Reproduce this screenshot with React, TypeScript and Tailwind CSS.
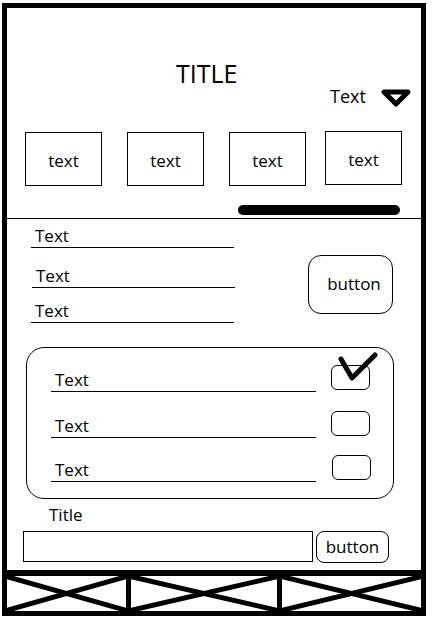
function Underlined({ className = '', width }: { className?: string; width: string }) {
  return (
    <div className={`border-b border-black pb-[3px] pl-[4px] text-[17px] leading-[17px] ${width} ${className}`}>
      Text
    </div>
  );
}

function Cross() {
  return (
    <svg className="h-full w-full" viewBox="0 0 100 100" preserveAspectRatio="none">
      <line x1="0" y1="2" x2="100" y2="98" stroke="black" strokeWidth="5" vectorEffect="non-scaling-stroke" />
      <line x1="0" y1="98" x2="100" y2="2" stroke="black" strokeWidth="5" vectorEffect="non-scaling-stroke" />
    </svg>
  );
}

function Checkbox({ className = '' }: { className?: string }) {
  return <div className={`h-[25px] w-[39px] rounded-[6px] border border-black ${className}`} />;
}

export default function App() {
  const tabs = [
    { ml: 'ml-[18px]', extra: '' },
    { ml: 'ml-[25px]', extra: '' },
    { ml: 'ml-[25px]', extra: '' },
    { ml: 'ml-[19px]', extra: '-mt-px' },
  ];

  return (
    <div className="h-[626px] w-[437px] bg-white pl-[2px] pt-[3px] font-['Open_Sans',sans-serif] text-black">
      <div className="flex h-[613px] w-[424px] flex-col border-[5px] border-black">
        {/* header */}
        <div className="mt-[53px] pl-[169px] text-[25px] leading-[25px]">TITLE</div>
        <div className="mt-px flex h-[20px] items-start pl-[323px]">
          <span className="w-[51px] text-[18px] leading-[18px]">Text</span>
          <svg className="mt-[2px]" width="30" height="19" viewBox="0 0 30 19">
            <polygon points="3,3 27,3 15,15" fill="none" stroke="black" strokeWidth="5" strokeLinejoin="round" />
          </svg>
        </div>

        {/* tabs */}
        <div className="mt-[25px] flex items-start">
          {tabs.map((t, i) => (
            <div
              key={i}
              className={`flex h-[54px] w-[77px] items-center justify-center border border-black pt-[2px] text-[17px] leading-[17px] ${t.ml} ${t.extra}`}
            >
              text
            </div>
          ))}
        </div>
        <div className="ml-[231px] mt-[19px] h-[10px] w-[162px] rounded-full bg-black" />
        <div className="mt-[3px] h-px bg-black" />

        {/* fields */}
        <div className="flex items-start">
          <div className="ml-[24px] flex flex-col">
            <Underlined width="w-[203px]" className="mt-[8px]" />
            <Underlined width="w-[203px]" className="ml-px mt-[19px]" />
            <Underlined width="w-[203px]" className="mt-[14px]" />
          </div>
          <div className="ml-[73px] mt-[36px] flex h-[59px] w-[85px] items-center justify-center rounded-[13px] border border-black pb-[3px] pl-[7px] text-[17px] leading-[17px]">
            button
          </div>
        </div>

        {/* card */}
        <div className="relative ml-[19px] mt-[24px] h-[152px] w-[368px] rounded-[18px] border border-black">
          <div className="ml-[24px] mt-[17px] flex items-start">
            <Underlined width="w-[265px]" className="mt-[6px] pl-[2px]" />
            <Checkbox className="ml-[15px]" />
          </div>
          <div className="ml-[24px] mt-[19px] flex items-start">
            <Underlined width="w-[265px]" className="mt-[6px] pl-[2px]" />
            <Checkbox className="ml-[15px]" />
          </div>
          <div className="ml-[24px] mt-[17px] flex items-start">
            <Underlined width="w-[265px]" className="mt-[6px] pl-[3px]" />
            <Checkbox className="ml-[16px]" />
          </div>
          <svg className="absolute left-[309px] top-[2px]" width="44" height="34" viewBox="0 0 44 34">
            <polyline points="5,9 16,28 39,5" fill="none" stroke="black" strokeWidth="5" strokeLinecap="round" strokeLinejoin="round" />
          </svg>
        </div>

        {/* title + input */}
        <div className="ml-[42px] mt-[7px] text-[17px] leading-[17px]">Title</div>
        <div className="ml-[16px] mt-[8px] flex items-start">
          <div className="h-[31px] w-[290px] border border-black" />
          <div className="ml-[3px] flex h-[32px] w-[73px] items-center justify-center rounded-[8px] border border-black pb-[2px] text-[17px] leading-[17px]">
            button
          </div>
        </div>

        {/* footer */}
        <div className="mt-auto flex h-[41px] border-t-[6px] border-black">
          <div className="w-[119px]">
            <Cross />
          </div>
          <div className="w-[151px] border-l-[5px] border-black">
            <Cross />
          </div>
          <div className="flex-1 border-l-[5px] border-black">
            <Cross />
          </div>
        </div>
      </div>
    </div>
  );
}
